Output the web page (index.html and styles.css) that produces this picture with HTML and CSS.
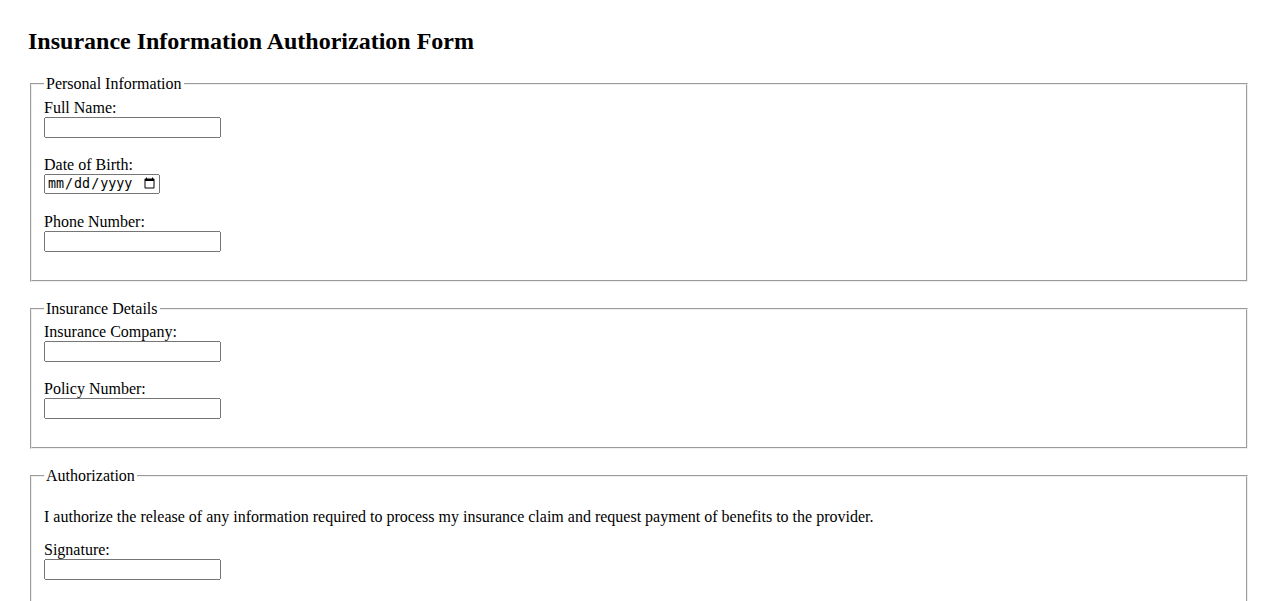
FILE: index.html
```html
<!DOCTYPE html>
<html lang="en">
<head>
<meta charset="utf-8">
<title>Insurance Information Authorization Form</title>
<link rel="stylesheet" href="styles.css">
</head>
<body>
<h2 class="title">Insurance Information Authorization Form</h2>
<form class="form">
  <fieldset class="section">
    <legend>Personal Information</legend>
    <div class="group">
      <label for="name">Full Name:</label>
      <input class="field" type="text" id="name">
    </div>
    <div class="group">
      <label for="dob">Date of Birth:</label>
      <input class="field-date" type="date" id="dob">
    </div>
    <div class="group">
      <label for="phone">Phone Number:</label>
      <input class="field" type="tel" id="phone">
    </div>
  </fieldset>
  <fieldset class="section">
    <legend>Insurance Details</legend>
    <div class="group">
      <label for="company">Insurance Company:</label>
      <input class="field" type="text" id="company">
    </div>
    <div class="group">
      <label for="policy">Policy Number:</label>
      <input class="field" type="text" id="policy">
    </div>
  </fieldset>
  <fieldset class="section">
    <legend>Authorization</legend>
    <p class="statement">I authorize the release of any information required to process my insurance claim and request payment of benefits to the provider.</p>
    <div class="group">
      <label for="sig">Signature:</label>
      <input class="field" type="text" id="sig">
    </div>
  </fieldset>
</form>
</body>
</html>
```

FILE: styles.css
```css
body {
  margin: 8px;
  padding: 20px;
  font-family: "Liberation Serif", "Times New Roman", serif;
  font-size: 16px;
  color: #000;
  background: #fff;
}
.title {
  font-size: 24px;
  margin: 0 0 20px;
}
.section {
  margin: 0 2px 18px;
}
.group {
  margin-bottom: 18px;
}
.group label {
  display: block;
}
.field {
  box-sizing: border-box;
  width: 177px;
  height: 21px;
}
.field-date {
  box-sizing: border-box;
  width: 116px;
  height: 20px;
  margin-bottom: 1px;
}
.statement {
  margin: 17px 0 15px;
}
```
